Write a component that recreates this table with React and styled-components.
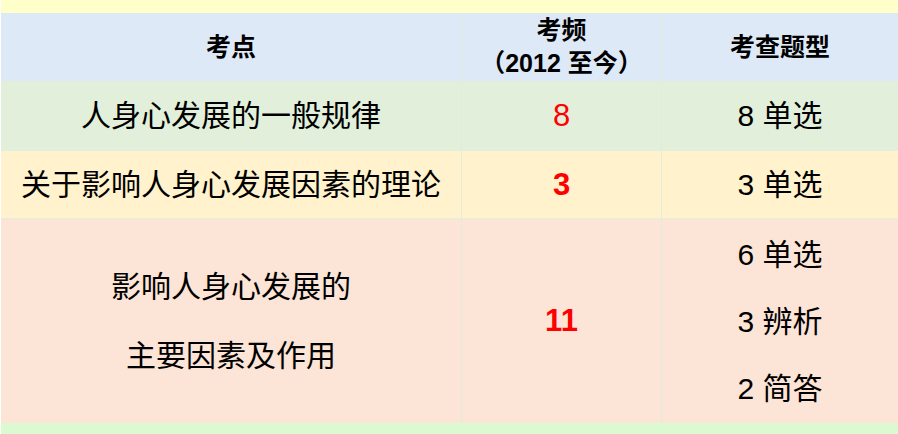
import React from "react";
import styled, { createGlobalStyle } from "styled-components";

const Global = createGlobalStyle`
  html, body { margin: 0; padding: 0; background: #ffffff; }
  body { font-family: "Liberation Sans", "Noto Sans CJK SC", sans-serif; color: #000; }
`;

const Page = styled.div`
  width: 898px;
  height: 434px;
  padding-left: 1px;
  box-sizing: border-box;
  overflow: hidden;
  display: flex;
  flex-direction: column;
`;

const Strip = styled.div`
  height: ${(p) => p.$h}px;
  background: ${(p) => p.$bg};
  flex-shrink: 0;
`;

const Row = styled.div`
  display: grid;
  grid-template-columns: 460px 200px 1fr;
  height: ${(p) => p.$h}px;
  background: ${(p) => p.$bg};
  box-sizing: border-box;
  border-bottom: ${(p) => (p.$line ? "1px solid #e4eedd" : "none")};
  flex-shrink: 0;
`;

const Cell = styled.div`
  display: flex;
  flex-direction: column;
  align-items: center;
  justify-content: center;
  text-align: center;
  box-sizing: border-box;
  border-left: ${(p) => (p.$first ? "none" : "1px solid #e2ecdc")};
  font-size: 30px;
  line-height: ${(p) => p.$lh || 34}px;
  white-space: nowrap;
`;

const HeadCell = styled(Cell)`
  font-size: 25px;
  font-weight: bold;
  line-height: 33px;
`;

const Count = styled.span`
  color: #ff0000;
  font-size: 31px;
  font-weight: ${(p) => (p.$bold ? "bold" : "normal")};
`;

export default function App() {
  return (
    <>
      <Global />
      <Page>
        <Strip $h={13} $bg="#ffffca" />
        <Row $h={68} $bg="#dde9f6">
          <HeadCell $first>考点</HeadCell>
          <HeadCell>
            <span>考频</span>
            <span>（2012 至今）</span>
          </HeadCell>
          <HeadCell>考查题型</HeadCell>
        </Row>
        <Row $h={70} $bg="#e2efda" $line>
          <Cell $first>人身心发展的一般规律</Cell>
          <Cell>
            <Count>8</Count>
          </Cell>
          <Cell>8 单选</Cell>
        </Row>
        <Row $h={68} $bg="#fff2cc" $line>
          <Cell $first>关于影响人身心发展因素的理论</Cell>
          <Cell>
            <Count $bold>3</Count>
          </Cell>
          <Cell>3 单选</Cell>
        </Row>
        <Row $h={204} $bg="#fce4d6">
          <Cell $first $lh={69}>
            <span>影响人身心发展的</span>
            <span>主要因素及作用</span>
          </Cell>
          <Cell>
            <Count $bold>11</Count>
          </Cell>
          <Cell $lh={67}>
            <span>6 单选</span>
            <span>3 辨析</span>
            <span>2 简答</span>
          </Cell>
        </Row>
        <Strip $h={11} $bg="#dbfad2" />
      </Page>
    </>
  );
}
